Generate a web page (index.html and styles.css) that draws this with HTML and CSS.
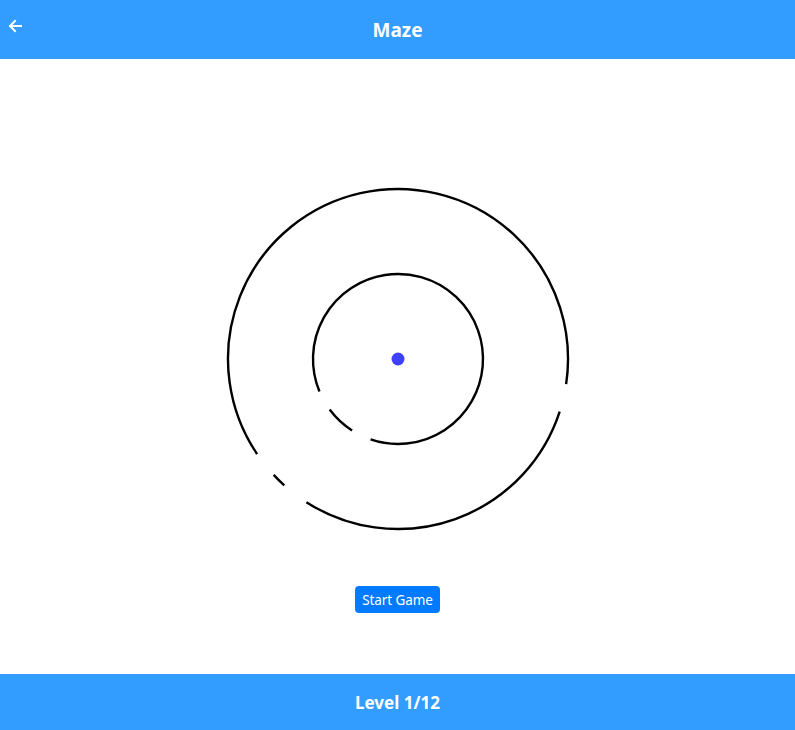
FILE: index.html
```html
<!DOCTYPE html>
<html>
<head>
<meta charset="utf-8">
<link rel="stylesheet" href="styles.css">
</head>
<body>
<div class="app">
  <header class="topbar">
    <button class="back" aria-label="Back">
      <svg width="16" height="16" viewBox="0 0 16 16"><path d="M14 8H3M8 3L3 8l5 5" fill="none" stroke="#fff" stroke-width="2" stroke-linecap="square"/></svg>
    </button>
    <h1 class="title">Maze</h1>
  </header>
  <main class="board">
    <svg class="maze" width="400" height="400" viewBox="0 0 400 400">
      <g fill="none" stroke="#000" stroke-width="2.4">
        <path d="M361.68 252.53 A170 170 0 0 1 108.40 343.23"/>
        <path d="M59.07 295.06 A170 170 0 1 1 368.13 225.13"/>
        <path d="M86.25 326.33 A170 170 0 0 1 75.67 315.94"/>
        <path d="M121.47 232.53 A85 85 0 1 1 172.61 280.46"/>
        <path d="M154.08 271.53 A85 85 0 0 1 131.67 250.56"/>
      </g>
      <circle cx="200" cy="200" r="6.5" fill="#4040ff"/>
    </svg>
    <button class="start">Start Game</button>
  </main>
  <footer class="bottombar">Level 1/12</footer>
</div>
</body>
</html>
```
FILE: styles.css
```css
html, body {
  margin: 0;
  padding: 0;
  background: #fff;
}
body {
  font-family: "Noto Sans", "Open Sans", sans-serif;
}
.app {
  height: 730px;
  display: flex;
  flex-direction: column;
}
.topbar {
  position: relative;
  height: 59px;
  background: #339cff;
  display: flex;
  align-items: center;
  justify-content: center;
}
.back {
  position: absolute;
  left: 6px;
  top: 17px;
  padding: 0;
  border: 0;
  background: transparent;
  width: 18px;
  height: 18px;
  display: flex;
  align-items: center;
  justify-content: center;
}
.title {
  margin: 0;
  color: #fff;
  font-size: 19px;
  font-weight: 700;
}
.board {
  flex: 1;
  display: flex;
  flex-direction: column;
  align-items: center;
  padding-top: 100px;
}
.maze {
  display: block;
}
.start {
  margin-top: 27px;
  height: 27px;
  padding: 0 7px;
  border: 0;
  border-radius: 4px;
  background: #007bff;
  color: #fff;
  font-family: "Noto Sans", "Open Sans", sans-serif;
  font-size: 13.5px;
  letter-spacing: -0.1px;
}
.bottombar {
  height: 56px;
  background: #339cff;
  color: #fff;
  font-size: 17px;
  font-weight: 700;
  display: flex;
  align-items: center;
  justify-content: center;
}
```
